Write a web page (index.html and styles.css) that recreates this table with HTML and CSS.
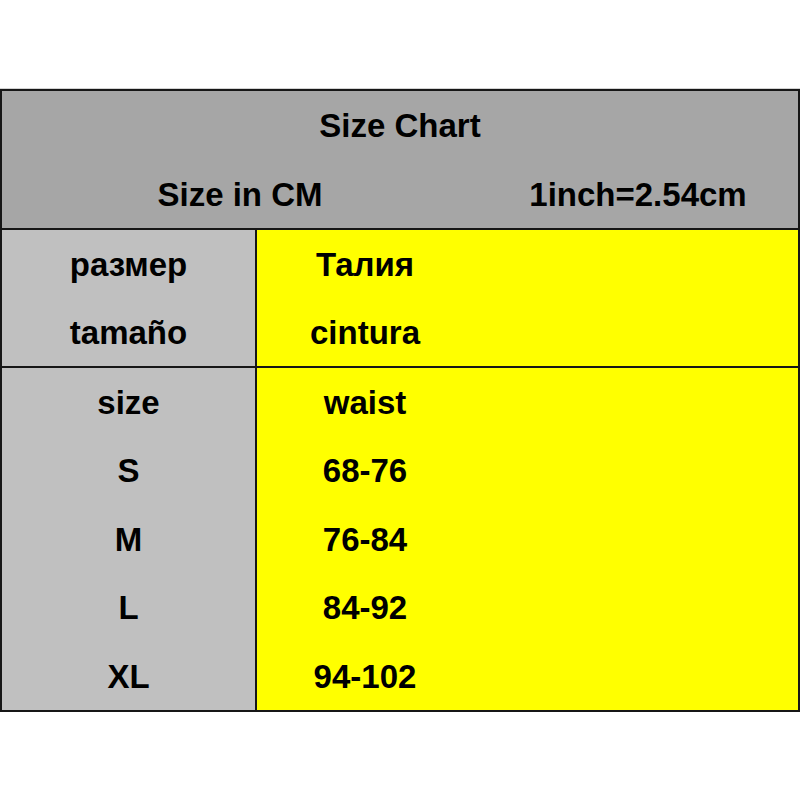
FILE: index.html
```html
<!DOCTYPE html>
<html>
<head>
<meta charset="utf-8">
<link rel="stylesheet" href="styles.css">
</head>
<body>
<div class="chart">
  <div class="head">
    <div class="cell full">Size Chart</div>
    <div class="split">
      <div class="cell">Size in CM</div>
      <div class="cell">1inch=2.54cm</div>
    </div>
  </div>
  <div class="section">
    <div class="label">
      <div class="cell">размер</div>
      <div class="cell">tamaño</div>
    </div>
    <div class="values">
      <div class="cell val">Талия</div>
      <div class="cell val">cintura</div>
    </div>
  </div>
  <div class="section sizes">
    <div class="label">
      <div class="cell">size</div>
      <div class="cell">S</div>
      <div class="cell">M</div>
      <div class="cell">L</div>
      <div class="cell">XL</div>
    </div>
    <div class="values">
      <div class="cell val">waist</div>
      <div class="cell val">68-76</div>
      <div class="cell val">76-84</div>
      <div class="cell val">84-92</div>
      <div class="cell val">94-102</div>
    </div>
  </div>
</div>
</body>
</html>
```

FILE: styles.css
```css
html, body {
  margin: 0;
  padding: 0;
  background: #ffffff;
}

body {
  font-family: "Liberation Sans", Arial, sans-serif;
  font-weight: bold;
  font-size: 33px;
  color: #000000;
}

.chart {
  box-sizing: border-box;
  width: 800px;
  margin-top: 89px;
  border: 2px solid #161616;
  outline: 1px solid #d2d2d2;
}

.head {
  background: #a6a6a6;
  display: flex;
  flex-direction: column;
}

.cell {
  box-sizing: border-box;
  height: 68px;
  line-height: 66px;
  padding-top: 2px;
  text-align: center;
  white-space: nowrap;
}

.head .cell {
  height: 68.5px;
  line-height: 66.5px;
}

.split {
  display: grid;
  grid-template-columns: 476px 1fr;
}

.section {
  display: grid;
  grid-template-columns: 255px 1fr;
  border-top: 2px solid #161616;
}

.label {
  background: #c0c0c0;
  border-right: 2px solid #161616;
  display: flex;
  flex-direction: column;
}

.values {
  background: #ffff00;
  display: flex;
  flex-direction: column;
}

.sizes .cell {
  height: 68.4px;
  line-height: 66.4px;
}

.val {
  width: 216px;
}
```
